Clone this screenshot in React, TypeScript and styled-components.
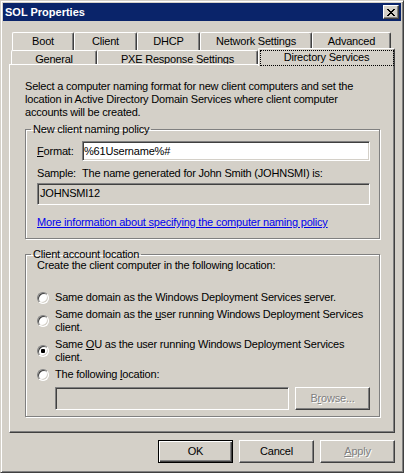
import React from "react";
import styled, { createGlobalStyle, css } from "styled-components";

const GlobalStyle = createGlobalStyle`
  html, body { margin: 0; padding: 0; background: #d4d0c8; }
  body {
    font-family: "Liberation Sans", Arial, sans-serif;
    font-size: 11px;
    letter-spacing: -0.2px;
    color: #000;
  }
  * { box-sizing: border-box; }
`;

const Window = styled.div`
  width: 404px;
  height: 473px;
  border: 1px solid;
  border-color: #d4d0c8 #404040 #404040 #d4d0c8;
  box-shadow: inset 1px 1px #fff, inset -1px -1px #808080;
  padding: 2px;
  background: #d4d0c8;
  display: flex;
  flex-direction: column;
`;

const TitleBar = styled.div`
  height: 18px;
  flex: none;
  background: #0a246a;
  display: flex;
  align-items: center;
  justify-content: space-between;
  padding: 0 2px;
`;

const Title = styled.span`
  color: #fff;
  font-weight: bold;
  line-height: 13px;
  letter-spacing: 0;
`;

const CloseButton = styled.div`
  width: 16px;
  height: 14px;
  background: #d4d0c8;
  border: 1px solid;
  border-color: #fff #404040 #404040 #fff;
  box-shadow: inset -1px -1px #808080;
  display: flex;
  align-items: center;
  justify-content: center;
  padding-right: 1px;
`;

const Body = styled.div`
  padding: 11px 6px 0;
  display: flex;
  flex-direction: column;
`;

const TabRow = styled.div<{ $indent: number; $height: number }>`
  display: flex;
  align-items: flex-start;
  padding-left: ${(p) => p.$indent}px;
  height: ${(p) => p.$height}px;
`;

const Tab = styled.div<{ $width: number; $height: number; $selected?: boolean }>`
  flex: none;
  width: ${(p) => p.$width}px;
  height: ${(p) => p.$height}px;
  border: 1px solid;
  border-bottom: none;
  border-color: #fff #404040 #404040 #fff;
  border-radius: 2px 2px 0 0;
  box-shadow: inset -1px 0 #808080;
  background: #d4d0c8;
  padding-top: 2px;
  line-height: 13px;
  text-align: center;
  white-space: nowrap;
  overflow: hidden;
  ${(p) =>
    p.$selected &&
    css`
      position: relative;
      z-index: 1;
      margin: -2px 0 -2px;
      overflow: visible;
      &::after {
        content: "";
        position: absolute;
        top: 1px;
        left: 1px;
        right: 0;
        bottom: 0;
        border: 1px dotted #000;
      }
    `}
`;

const Panel = styled.div`
  height: 369px;
  flex: none;
  border: 1px solid;
  border-color: #fff #404040 #404040 #fff;
  box-shadow: inset -1px -1px #808080;
  padding: 15px 14px 0 15px;
`;

const Description = styled.p`
  margin: 0;
  line-height: 13px;
`;

const GroupBox = styled.fieldset<{ $mt: number }>`
  margin: ${(p) => p.$mt}px 0 0;
  padding: 0;
  min-width: 0;
  border: 1px solid #808080;
  box-shadow: 1px 1px 0 #fff, inset 1px 1px 0 #fff;
`;

const Legend = styled.legend`
  padding: 0 2px;
  margin-left: 5px;
  line-height: 13px;
`;

const GroupBody = styled.div<{ $pt: number; $pb: number }>`
  padding: ${(p) => p.$pt}px 9px ${(p) => p.$pb}px 11px;
`;

const FieldRow = styled.div<{ $mt?: number }>`
  display: grid;
  grid-template-columns: 45px 1fr;
  align-items: center;
  line-height: 13px;
  margin-top: ${(p) => p.$mt ?? 0}px;
`;

const sunken = css`
  border: 1px solid;
  border-color: #808080 #fff #fff #808080;
  box-shadow: inset 1px 1px #404040, inset -1px -1px #d4d0c8;
`;

const TextBox = styled.input`
  ${sunken};
  height: 20px;
  width: 100%;
  padding: 0 1px;
  margin: 0;
  font: inherit;
  letter-spacing: inherit;
  color: #000;
  background: #fff;
  outline: none;
`;

const ReadonlyBox = styled.div`
  ${sunken};
  height: 22px;
  margin-top: 3px;
  padding: 3px 2px 0;
  line-height: 13px;
  background: #d4d0c8;
`;

const Link = styled.a`
  display: inline-block;
  margin-top: 11px;
  line-height: 13px;
  color: #0000ee;
  text-decoration: underline;
`;

const U = styled.span`
  text-decoration: underline;
`;

const Intro = styled.div`
  line-height: 13px;
  margin-top: -2px;
`;

const RadioList = styled.div`
  display: flex;
  flex-direction: column;
  gap: 4px;
  margin-top: 19px;
`;

const RadioRow = styled.label`
  display: flex;
  align-items: center;
  gap: 6px;
  line-height: 13px;
  white-space: nowrap;
`;

const RadioCircle = styled.span<{ $checked?: boolean }>`
  flex: none;
  position: relative;
  width: 12px;
  height: 12px;
  border-radius: 50%;
  border: 1px solid;
  border-color: #808080 #fff #fff #808080;
  box-shadow: inset 1px 1px #404040, inset -1px -1px #d4d0c8;
  background: #fff;
  ${(p) =>
    p.$checked &&
    css`
      &::after {
        content: "";
        position: absolute;
        left: 3px;
        top: 3px;
        width: 4px;
        height: 4px;
        border-radius: 1px;
        background: #000;
      }
    `}
`;

const LocationRow = styled.div`
  display: flex;
  gap: 6px;
  margin-top: 6px;
  padding-left: 18px;
`;

const LocationBox = styled.div`
  ${sunken};
  width: 234px;
  height: 23px;
  background: #d4d0c8;
`;

const Button = styled.button<{ $default?: boolean }>`
  width: 75px;
  height: 23px;
  margin: 0;
  padding: 0;
  font: inherit;
  letter-spacing: inherit;
  line-height: 13px;
  color: #000;
  background: #d4d0c8;
  border: 1px solid;
  border-color: #fff #404040 #404040 #fff;
  box-shadow: inset -1px -1px #808080;
  ${(p) =>
    p.$default &&
    css`
      border-color: #000;
      box-shadow: inset 1px 1px #fff, inset -1px -1px #404040, inset -2px -2px #808080;
    `}
  &:disabled {
    color: #808080;
    text-shadow: 1px 1px 0 #fff;
  }
`;

const Footer = styled.div`
  display: flex;
  justify-content: flex-end;
  gap: 6px;
  padding-top: 7px;
`;

const CloseGlyph = () => (
  <svg width="8" height="7" viewBox="0 0 8 7" shapeRendering="crispEdges">
    <g fill="#000">
      <rect x="0" y="0" width="2" height="1" />
      <rect x="6" y="0" width="2" height="1" />
      <rect x="1" y="1" width="2" height="1" />
      <rect x="5" y="1" width="2" height="1" />
      <rect x="2" y="2" width="4" height="1" />
      <rect x="3" y="3" width="2" height="1" />
      <rect x="2" y="4" width="4" height="1" />
      <rect x="1" y="5" width="2" height="1" />
      <rect x="5" y="5" width="2" height="1" />
      <rect x="0" y="6" width="2" height="1" />
      <rect x="6" y="6" width="2" height="1" />
    </g>
  </svg>
);

const backTabs = [
  { label: "Boot", width: 62 },
  { label: "Client", width: 63 },
  { label: "DHCP", width: 63 },
  { label: "Network Settings", width: 112 },
  { label: "Advanced", width: 79 },
];

const frontTabs = [
  { label: "General", width: 86 },
  { label: "PXE Response Settings", width: 161 },
  { label: "Directory Services", width: 137, selected: true },
];

export default function App() {
  return (
    <>
      <GlobalStyle />
      <Window>
        <TitleBar>
          <Title>SOL Properties</Title>
          <CloseButton>
            <CloseGlyph />
          </CloseButton>
        </TitleBar>
        <Body>
          <TabRow $indent={3} $height={18}>
            {backTabs.map((t) => (
              <Tab key={t.label} $width={t.width} $height={18}>
                {t.label}
              </Tab>
            ))}
          </TabRow>
          <TabRow $indent={2} $height={14}>
            {frontTabs.map((t) => (
              <Tab
                key={t.label}
                $width={t.width}
                $height={t.selected ? 18 : 14}
                $selected={t.selected}
              >
                {t.label}
              </Tab>
            ))}
          </TabRow>
          <Panel>
            <Description>
              Select a computer naming format for new client computers and set the
              <br />
              location in Active Directory Domain Services where client computer
              <br />
              accounts will be created.
            </Description>
            <GroupBox $mt={4}>
              <Legend>New client naming policy</Legend>
              <GroupBody $pt={5} $pb={9}>
                <FieldRow>
                  <span>
                    <U>F</U>ormat:
                  </span>
                  <TextBox defaultValue="%61Username%#" />
                </FieldRow>
                <FieldRow $mt={6}>
                  <span>Sample:</span>
                  <span>The name generated for John Smith (JOHNSMI) is:</span>
                </FieldRow>
                <ReadonlyBox>JOHNSMI12</ReadonlyBox>
                <Link href="#">More information about specifying the computer naming policy</Link>
              </GroupBody>
            </GroupBox>
            <GroupBox $mt={9}>
              <Legend>Client account location</Legend>
              <GroupBody $pt={0} $pb={6}>
                <Intro>Create the client computer in the following location:</Intro>
                <RadioList>
                  <RadioRow>
                    <RadioCircle />
                    <span>
                      Same domain as the Windows Deployment Services <U>s</U>erver.
                    </span>
                  </RadioRow>
                  <RadioRow>
                    <RadioCircle />
                    <span>
                      Same domain as the <U>u</U>ser running Windows Deployment Services
                      <br />
                      client.
                    </span>
                  </RadioRow>
                  <RadioRow>
                    <RadioCircle $checked />
                    <span>
                      Same <U>O</U>U as the user running Windows Deployment Services
                      <br />
                      client.
                    </span>
                  </RadioRow>
                  <RadioRow>
                    <RadioCircle />
                    <span>
                      The following <U>l</U>ocation:
                    </span>
                  </RadioRow>
                </RadioList>
                <LocationRow>
                  <LocationBox />
                  <Button disabled>
                    B<U>r</U>owse...
                  </Button>
                </LocationRow>
              </GroupBody>
            </GroupBox>
          </Panel>
          <Footer>
            <Button $default>OK</Button>
            <Button>Cancel</Button>
            <Button disabled>
              <U>A</U>pply
            </Button>
          </Footer>
        </Body>
      </Window>
    </>
  );
}
